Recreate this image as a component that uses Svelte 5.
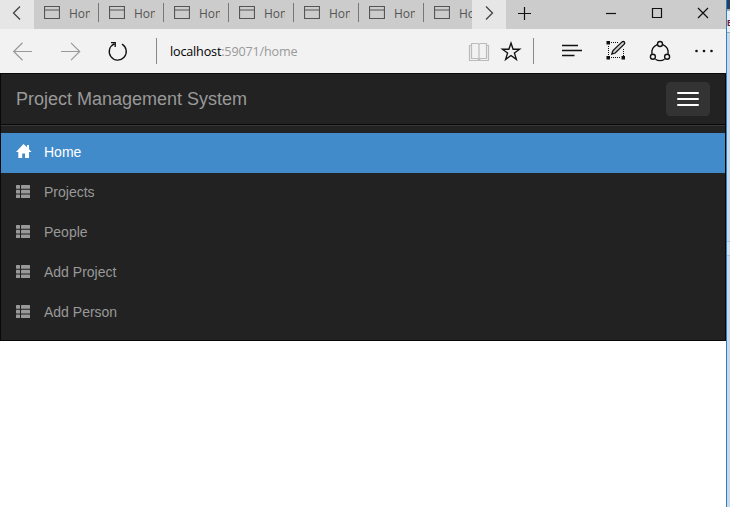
<script>
  const tabs = Array.from({ length: 7 }, () => 'Home');
  const items = [
    { label: 'Home', active: true },
    { label: 'Projects' },
    { label: 'People' },
    { label: 'Add Project' },
    { label: 'Add Person' }
  ];
  const rows = [1, 5.7, 10.4];
</script>

<div class="desktop">
  <div class="window">
    <div class="tabbar">
      <div class="scroll">
        <svg width="34" height="29" viewBox="0 0 34 29"><path d="M20 6.5 L13.5 13 L20 19.5" /></svg>
      </div>
      <div class="tabs">
        {#each tabs as title}
          <div class="tab">
            <svg class="page" width="16" height="13" viewBox="0 0 16 13"><path d="M.5 .5H15.5V12.5H.5ZM.5 4H15.5" /></svg>
            <span class="title">{title}</span>
            <i></i>
          </div>
        {/each}
      </div>
      <div class="scroll">
        <svg width="34" height="29" viewBox="0 0 34 29"><path d="M14 6.5 L20.5 13 L14 19.5" /></svg>
      </div>
      <svg class="dark" width="36" height="29" viewBox="0 0 36 29"><path d="M12 13.5H25M18.5 7V20" /></svg>
      <div class="grow"></div>
      <svg class="dark" width="46" height="29" viewBox="0 0 46 29"><path d="M18 13.5H28" /></svg>
      <svg class="dark" width="46" height="29" viewBox="0 0 46 29"><path d="M18.5 8.5H27.5V17.5H18.5Z" /></svg>
      <svg class="dark" width="46" height="29" viewBox="0 0 46 29"><path d="M18 8L28 18M28 8L18 18" /></svg>
    </div>

    <div class="toolbar">
      <svg class="faded" width="46" height="44" viewBox="0 0 46 44"><path d="M32 22.5H13.5M22.5 13.8L13.7 22.5L22.5 31.2" /></svg>
      <svg class="faded" width="48" height="44" viewBox="0 0 48 44"><path d="M15 22.5H33.5M25 13.8L33.7 22.5L25 31.2" /></svg>
      <svg class="dark mid" width="48" height="44" viewBox="0 0 48 44"><path d="M20.3 14.8A8.5 8.5 0 1 0 28 15.2M17 13.6H21.2V18" /></svg>
      <div class="rule first"></div>
      <div class="address"><b>localhost</b>:59071/home</div>
      <svg class="book" width="32" height="44" viewBox="0 0 32 44"><path d="M8.5 14.5H14.5Q16 14.5 16 16Q16 14.5 17.5 14.5H23.5V29.5H17.5L16 31L14.5 29.5H8.5ZM16 16V31M8.5 16.5H6.5V31.5H25.5V16.5H23.5" /></svg>
      <svg class="dark mid" width="32" height="44" viewBox="0 0 32 44"><path d="M16 14L18.1 20.2H24.6L19.4 24L21.4 30.4L16 26.5L10.6 30.4L12.6 24L7.4 20.2H13.9Z" /></svg>
      <div class="rule second"></div>
      <svg class="dark thick" width="44" height="44" viewBox="0 0 44 44"><path d="M12 16.5H28M12 21.5H32M12 26.5H24.5" /></svg>
      <svg class="dark" width="44" height="44" viewBox="-2 0 44 44">
        <path class="dots" d="M15 13.5H22M15 28.5H25M12.5 17V27M27.5 20V27" />
        <path class="solid" d="M10.5 12h3.5v3.5h-3.5zM10.5 27h3.5v3.5h-3.5zM25.5 27h3.5v3.5h-3.5z" />
        <path class="pencil" d="M15.8 25L17 21.5L26 12.9Q27.5 12 28.4 13Q29.2 14.2 28.3 15.1L19.2 24Z" />
      </svg>
      <svg class="dark mid" width="46" height="44" viewBox="1 0 46 44"><path d="M20.2 15.6A8.7 8.7 0 0 0 15 24.8M25.8 15.6A8.7 8.7 0 0 1 31 24.8M18.4 30.2A8.7 8.7 0 0 0 27.6 30.2" /><circle cx="23" cy="15" r="2.5" /><circle cx="15.9" cy="27.7" r="2.5" /><circle cx="30.1" cy="27.7" r="2.5" /></svg>
      <svg class="more" width="42" height="44" viewBox="1 0 42 44"><circle cx="13.5" cy="22" r="1.3" /><circle cx="21" cy="22" r="1.3" /><circle cx="28.5" cy="22" r="1.3" /></svg>
    </div>

    <nav>
      <header>
        <span class="brand">Project Management System</span>
        <button aria-label="Toggle navigation"><i></i><i></i><i></i></button>
      </header>
      <ul>
        {#each items as item}
          <li class:active={item.active}>
            <svg width="16" height="15" viewBox="0 0 16 15">
              {#if item.active}
                <path d="M7.5 0L11 3.3V1H13V5.2L15.5 8H13V14H9V9.5H6.2V14H2.3V8H0Z" />
              {:else}
                {#each rows as y}
                  <rect x="0" {y} width="4" height="3.7" rx=".5" />
                  <rect x="5" {y} width="9" height="3.7" rx=".5" />
                {/each}
              {/if}
            </svg>
            <span>{item.label}</span>
          </li>
        {/each}
      </ul>
    </nav>
  </div>
  <div class="behind">
    <div class="cap"></div>
    <div class="snippet">E</div>
    <div class="pane"></div>
    <div class="strip"></div>
  </div>
</div>

<style>
  :global(body) { margin: 0; background: #fff; }
  .desktop { display: flex; width: 730px; height: 507px; overflow: hidden; background: #fff; }
  .window { width: 726px; flex: none; }
  svg { display: block; flex: none; fill: none; stroke: #444; stroke-width: 1.2; }
  .tabbar { display: flex; height: 29px; background: #ccc; }
  .scroll { background: #e6e6e6; width: 34px; }
  .scroll svg { stroke-width: 1.3; }
  .tabs { display: flex; width: 438px; flex: none; overflow: hidden; }
  .tab { display: flex; flex: none; box-sizing: border-box; width: 65px; padding-left: 10px; }
  .page { margin-top: 6px; stroke: #555; }
  .title { width: 22px; margin-left: 9px; overflow: hidden; white-space: nowrap; font: 12px/27px "Open Sans", "Noto Sans", sans-serif; color: #555; }
  .tab i { width: 1px; height: 19px; margin: 3px 0 0 8px; background: #777; flex: none; position: relative; left: 0; }
  .tab { padding-right: 0; }
  .grow { flex: 1; }
  .dark { stroke: #111; }
  .thick { stroke-width: 1.5; }
  .mid { stroke-width: 1.35; }
  .toolbar { display: flex; height: 44px; background: #f2f2f2; }
  .faded { stroke: #999; }
  .rule { width: 1px; height: 26px; background: #888; flex: none; margin-top: 9px; }
  .first { margin-left: 14px; }
  .second { margin: 9px 16px 0 6px; }
  .address { flex: 1; padding-left: 13px; font: 12.6px/45px "Open Sans", "Noto Sans", sans-serif; letter-spacing: -.17px; color: #999; }
  .address b { font-weight: 400; color: #000; }
  .book { stroke: #bbb; }
  .dots { stroke-dasharray: 1 1; stroke-width: 1; }
  .solid { fill: #111; stroke: none; }
  .pencil { fill: #ccc; stroke-width: 1.3; }
  .more { fill: #111; stroke: none; }
  nav { box-sizing: border-box; height: 268px; background: #222; border: 1px solid #080808; font-family: "Liberation Sans", Arial, sans-serif; color: #999; }
  header { display: flex; justify-content: space-between; align-items: center; height: 50px; padding: 0 15px; border-bottom: 1px solid #080808; }
  .brand { font-size: 18px; line-height: 20px; }
  button { box-sizing: border-box; width: 44px; height: 34px; padding: 9px 10px; margin: 0; border: 1px solid #333; border-radius: 4px; background: #333; display: flex; flex-direction: column; gap: 4px; }
  button i { width: 22px; height: 2px; border-radius: 1px; background: #fff; flex: none; }
  ul { list-style: none; margin: 0; padding: 7px 0 0; border-top: 1px solid #373737; }
  li { display: flex; height: 40px; align-items: center; padding-left: 15px; font-size: 14px; line-height: 20px; box-sizing: border-box; }
  li svg { fill: #999; stroke: none; margin: -3px 12px 0 0; }
  li span { margin-top: -3px; }
  .active { background: #428bca; color: #fff; }
  .active svg { fill: #fff; }
  .behind { box-sizing: border-box; width: 4px; border-left: 1px solid #2f7fc1; background: #c9d9ea; overflow: hidden; flex: none; }
  .cap { height: 9px; background: #263e60; }
  .snippet { box-sizing: border-box; height: 24px; border: solid #aaa; border-width: 2px 0 1px; background: #e6edf5; font: bold 9px/24px "Liberation Sans", Arial, sans-serif; color: #7b1830; }
  .pane { height: 208px; }
  .strip { box-sizing: border-box; height: 15px; border: solid #b3c3d6; border-width: 1px 0; background: #d5e1ee; }
</style>
